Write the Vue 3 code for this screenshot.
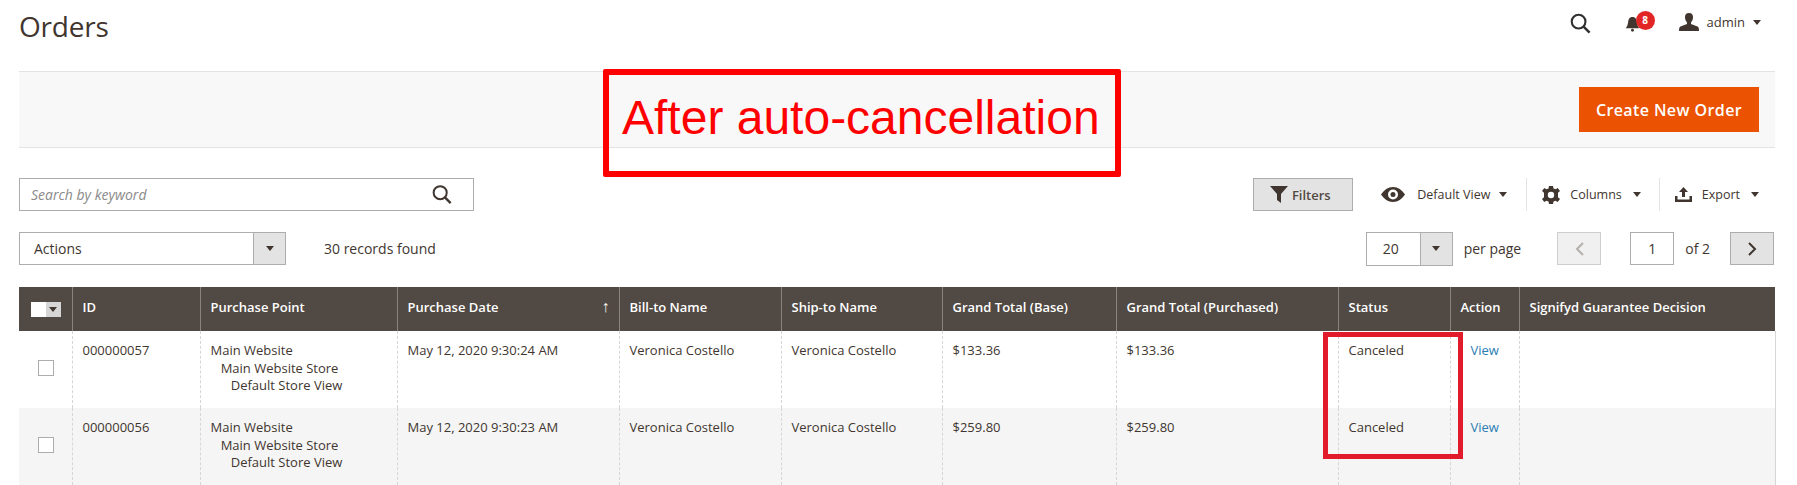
<template>
  <div class="page">
    <header class="topbar">
      <h1 class="title">Orders</h1>
      <div class="user-tools">
        <svg class="top-search" width="21" height="21" viewBox="0 0 22 22"><circle cx="9" cy="9" r="7.2" fill="none" stroke="#303030" stroke-width="2.2" /><path d="M14.2 14.2 20.5 20.5" stroke="#303030" stroke-width="2.6" /></svg>
        <div class="bell">
          <svg width="17" height="16" viewBox="0 0 17 18"><path d="M8.5 1C5 1 4 3.5 3.6 6.5 3.2 10 2.5 12 .8 13.8h15.4C14.500 12 13.800 10 13.400 6.500 13 3.500 12 1 8.500 1Z" fill="#41362f" /><circle cx="8.500" cy="16" r="1.600" fill="#41362f" /></svg>
          <span class="badge">8</span>
        </div>
        <svg class="user-icon" width="20" height="18" viewBox="0 0 20 18"><path d="M10 0C7 0 5.800 2 6 4.800 6.200 7 7 8.500 8 9.300V11L1.500 13.500C.5 14 0 15 0 18H20C20 15 19.500 14 18.500 13.500L12 11V9.300C13 8.500 13.800 7 14 4.800 14.200 2 13 0 10 0Z" fill="#41362f" /></svg>
        <span class="admin">admin</span>
        <i class="caret"></i>
      </div>
    </header>

    <section class="action-bar">
      <button class="primary">Create New Order</button>
    </section>

    <div class="toolbar first">
      <div class="search">
        <span>Search by keyword</span>
        <svg width="20" height="21" viewBox="0 0 22 22"><circle cx="9" cy="9" r="7.200" fill="none" stroke="#41362f" stroke-width="2.200" /><path d="M14.200 14.200 20.500 20.500" stroke="#41362f" stroke-width="2.600" /></svg>
      </div>
      <button class="filters">
        <svg width="18" height="17" viewBox="0 0 18 17"><path d="M0 0H18L11 8V17L7 14V8Z" fill="#41362f" /></svg>
        Filters
      </button>
      <div class="tool view">
        <svg width="24" height="15" viewBox="0 0 24 15"><path fill-rule="evenodd" d="M12 0C7 0 3 3 0 7.500 3 12 7 15 12 15S21 12 24 7.500C21 3 17 0 12 0ZM12 2.500A5 5 0 1 1 12 12.500 5 5 0 0 1 12 2.500Z" fill="#41362f" /><circle cx="12" cy="7.500" r="2.500" fill="#41362f" /></svg>
        <span>Default View</span>
        <i class="caret"></i>
      </div>
      <div class="tool columns">
        <svg width="18" height="18" viewBox="0 0 18 18"><path fill-rule="evenodd" d="M7 0H11L11.500 2.500 13.500 3.300 15.700 2 18 5 16 6.700V11.300L18 13 15.700 16 13.500 14.700 11.500 15.500 11 18H7L6.500 15.500 4.500 14.700 2.300 16 0 13 2 11.300V6.700L0 5 2.300 2 4.500 3.300 6.500 2.500ZM9 5.800A3.200 3.200 0 1 0 9 12.200 3.200 3.200 0 0 0 9 5.800Z" fill="#41362f" /></svg>
        <span>Columns</span>
        <i class="caret"></i>
      </div>
      <div class="tool export">
        <svg width="17" height="15" viewBox="0 0 17 15"><path d="M8.500 0 13 5H10V10H7V5H4ZM0 9H2.500V12.500H14.500V9H17V15H0Z" fill="#41362f" /></svg>
        <span>Export</span>
        <i class="caret"></i>
      </div>
    </div>

    <div class="toolbar second">
      <div class="select actions">
        <span class="select-value">Actions</span>
        <span class="select-arrow"><i class="caret"></i></span>
      </div>
      <span class="records">30 records found</span>
      <div class="select per-page">
        <span class="select-value">20</span>
        <span class="select-arrow"><i class="caret"></i></span>
      </div>
      <span class="per-label">per page</span>
      <button class="pager prev">
        <svg width="9" height="14" viewBox="0 0 9 14"><path d="M8 1 2 7l6 6" fill="none" stroke="#b5b0ac" stroke-width="2" /></svg>
      </button>
      <div class="page-input">1</div>
      <span class="page-total">of 2</span>
      <button class="pager next">
        <svg width="9" height="14" viewBox="0 0 9 14"><path d="M1 1l6 6-6 6" fill="none" stroke="#41362f" stroke-width="2" /></svg>
      </button>
    </div>

    <table class="grid">
      <colgroup>
        <col v-for="w in widths" :key="w.id" :style="{ width: w.px + 'px' }" />
      </colgroup>
      <thead>
        <tr>
          <th class="check-head"><span class="multi"><b></b><i class="caret"></i></span></th>
          <th v-for="c in columns" :key="c" :class="{ sorted: c === 'Purchase Date' }">{{ c }}</th>
        </tr>
      </thead>
      <tbody>
        <tr v-for="o in orders" :key="o.id">
          <td class="check-cell"><span class="box"></span></td>
          <td>{{ o.id }}</td>
          <td>Main Website<br />&nbsp;&nbsp;&nbsp;Main Website Store<br />&nbsp;&nbsp;&nbsp;&nbsp;&nbsp;&nbsp;Default Store View</td>
          <td>{{ o.date }}</td>
          <td>Veronica Costello</td>
          <td>Veronica Costello</td>
          <td>{{ o.total }}</td>
          <td>{{ o.total }}</td>
          <td>Canceled</td>
          <td class="link-cell"><a>View</a></td>
          <td></td>
        </tr>
      </tbody>
    </table>

    <div class="note">After auto-cancellation</div>
    <div class="status-mark"></div>
  </div>
</template>

<script setup>
const columns = [
  "ID",
  "Purchase Point",
  "Purchase Date",
  "Bill-to Name",
  "Ship-to Name",
  "Grand Total (Base)",
  "Grand Total (Purchased)",
  "Status",
  "Action",
  "Signifyd Guarantee Decision",
];

const edges = [19, 72, 200, 397, 619, 781, 942, 1116, 1338, 1450, 1519, 1775];
const widths = edges.slice(1).map((x, i) => ({ id: i, px: x - edges[i] }));

const orders = [
  { id: "000000057", date: "May 12, 2020 9:30:24 AM", total: "$133.36" },
  { id: "000000056", date: "May 12, 2020 9:30:23 AM", total: "$259.80" },
];
</script>

<style scoped>
.page {
  position: relative;
  width: 1797px;
  height: 485px;
  padding: 0 22px 0 19px;
  box-sizing: border-box;
  overflow: hidden;
  background: #fff;
  color: #303030;
  font-family: "Open Sans", sans-serif;
  font-size: 13px;
}
.topbar {
  display: flex;
  justify-content: space-between;
  height: 71px;
}
.title {
  margin: 6px 0 0;
  font-size: 28px;
  line-height: 40px;
  font-weight: 400;
  letter-spacing: -0.2px;
  color: #41362f;
}
.user-tools {
  display: flex;
  align-items: center;
  height: 44px;
  padding-right: 14px;
}
.top-search {
  margin: 3px 33px 0 0;
}
.bell {
  position: relative;
  width: 17px;
  height: 16px;
  margin: 4px 38px 0 0;
}
.bell svg {
  display: block;
}
.badge {
  position: absolute;
  left: 12px;
  top: -5px;
  width: 19px;
  height: 19px;
  border-radius: 50%;
  background: #e22626;
  color: #fff;
  font-size: 10px;
  font-weight: 700;
  line-height: 19px;
  text-align: center;
}
.user-icon {
  margin: -1px 8px 0 0;
}
.admin {
  margin-right: 8px;
  color: #41362f;
}
.caret {
  display: inline-block;
  width: 0;
  height: 0;
  border: 4px solid transparent;
  border-top: 5px solid #41362f;
  border-bottom: 0;
}
.action-bar {
  display: flex;
  justify-content: flex-end;
  align-items: center;
  height: 77px;
  padding-right: 16px;
  box-sizing: border-box;
  background: #f8f8f8;
  border-top: 1px solid #e3e3e3;
  border-bottom: 1px solid #e3e3e3;
}
.primary {
  width: 180px;
  height: 45px;
  border: 0;
  background: #eb5202;
  color: #fff;
  font: 600 16px "Open Sans", sans-serif;
  letter-spacing: 0.4px;
}
.toolbar {
  display: flex;
  align-items: center;
}
.first {
  height: 33px;
  margin-top: 30px;
}
.second {
  height: 33px;
  margin-top: 21px;
}
.search {
  display: flex;
  justify-content: space-between;
  align-items: center;
  width: 455px;
  height: 33px;
  padding: 0 21px 0 11px;
  box-sizing: border-box;
  border: 1px solid #adadad;
  color: #8a8a8a;
  font-style: italic;
  font-size: 14px;
}
.filters {
  display: flex;
  align-items: center;
  justify-content: center;
  gap: 4px;
  width: 100px;
  height: 33px;
  padding: 0 6px 0 0;
  margin-left: auto;
  border: 1px solid #adadad;
  background: #e3e3e3;
  color: #514943;
  font: 600 13px "Open Sans", sans-serif;
}
.tool {
  display: flex;
  align-items: center;
  height: 33px;
  color: #41362f;
  font-size: 12.5px;
}
.view {
  margin-left: 28px;
  padding-right: 19px;
  border-right: 1px solid #e3e3e3;
}
.view span {
  margin: 0 9px 0 12px;
}
.columns {
  padding: 0 18px 0 15px;
  border-right: 1px solid #e3e3e3;
}
.columns span {
  margin: 0 11px 0 10px;
}
.export {
  padding-left: 15px;
  padding-right: 16px;
}
.export span {
  margin: 0 11px 0 10px;
}
.select {
  display: flex;
  height: 33px;
  box-sizing: border-box;
  border: 1px solid #adadad;
}
.select-value {
  flex: 1;
  align-self: center;
}
.select-arrow {
  display: flex;
  align-items: center;
  justify-content: center;
  width: 31px;
  background: #e3e3e3;
  border-left: 1px solid #adadad;
}
.actions {
  width: 267px;
  color: #41362f;
  font-size: 14px;
}
.actions .select-value {
  padding-left: 14px;
}
.records {
  margin-left: 38px;
  color: #41362f;
  font-size: 14px;
}
.per-page {
  width: 87px;
  height: 34px;
  margin-left: auto;
  color: #41362f;
  font-size: 14px;
}
.per-page .select-value {
  padding-left: 16px;
}
.per-label {
  margin-left: 11px;
  color: #41362f;
  font-size: 14px;
}
.pager {
  display: flex;
  align-items: center;
  justify-content: center;
  width: 44px;
  height: 33px;
  padding: 0;
  border: 1px solid #d0cdcb;
  background: #f0f0f0;
}
.prev {
  margin-left: 36px;
}
.next {
  margin-right: 1px;
  margin-left: 20px;
  border-color: #adadad;
  background: #e3e3e3;
}
.page-input {
  width: 44px;
  height: 33px;
  margin-left: 29px;
  box-sizing: border-box;
  border: 1px solid #adadad;
  line-height: 31px;
  text-align: center;
  color: #41362f;
  font-size: 14px;
}
.page-total {
  margin-left: 11px;
  color: #41362f;
  font-size: 14px;
}
.grid {
  width: 1756px;
  margin-top: 22px;
  border-collapse: collapse;
  table-layout: fixed;
}
th {
  height: 44px;
  padding: 0 10px 4px;
  box-sizing: border-box;
  background: #514943;
  border-left: 1px solid #8a837f;
  color: #fff;
  font-size: 13px;
  font-weight: 600;
  text-align: left;
}
th:first-child {
  border-left: 0;
}
.sorted {
  position: relative;
}
.sorted::after {
  content: "↑";
  position: absolute;
  right: 9px;
  top: 8px;
  font-size: 16px;
  font-weight: 400;
}
.multi {
  display: flex;
  align-items: center;
  width: 30px;
  height: 15px;
  margin-top: 4px;
  background: #d6d6d6;
}
.multi b {
  width: 15px;
  height: 15px;
  margin-right: 3px;
  background: #fff;
}
.check-head {
  padding-left: 12px;
}
td {
  height: 77px;
  padding: 11px 10px 0;
  box-sizing: border-box;
  vertical-align: top;
  border-left: 1px dashed #d6d6d6;
  line-height: 17.5px;
  color: #41362f;
  white-space: nowrap;
}
td:first-child {
  border-left: 0;
}
td:last-child {
  border-right: 1px solid #d6d6d6;
}
tbody tr:nth-child(even) td {
  background: #f5f5f5;
}
.check-cell {
  vertical-align: middle;
  padding: 0 0 0 19px;
}
.box {
  display: block;
  width: 16px;
  height: 16px;
  border: 1px solid #adadad;
  box-sizing: border-box;
  background: #fff;
  margin-top: -3px;
}
.link-cell {
  padding-left: 20px;
}
.link-cell a {
  color: #2a7eb3;
}
.note {
  position: absolute;
  left: 603px;
  top: 69px;
  width: 518px;
  height: 108px;
  box-sizing: border-box;
  padding: 15px 0 0 13px;
  border: 6px solid #f00;
  border-radius: 2px;
  color: #f00;
  font-family: "Liberation Sans", sans-serif;
  font-size: 48px;
  line-height: 56px;
  white-space: nowrap;
}
.status-mark {
  position: absolute;
  left: 1323px;
  top: 332px;
  width: 140px;
  height: 127px;
  box-sizing: border-box;
  border: 5px solid #e21b2c;
}
</style>

<style>
html, body {
  margin: 0;
  overflow: hidden;
}
</style>
